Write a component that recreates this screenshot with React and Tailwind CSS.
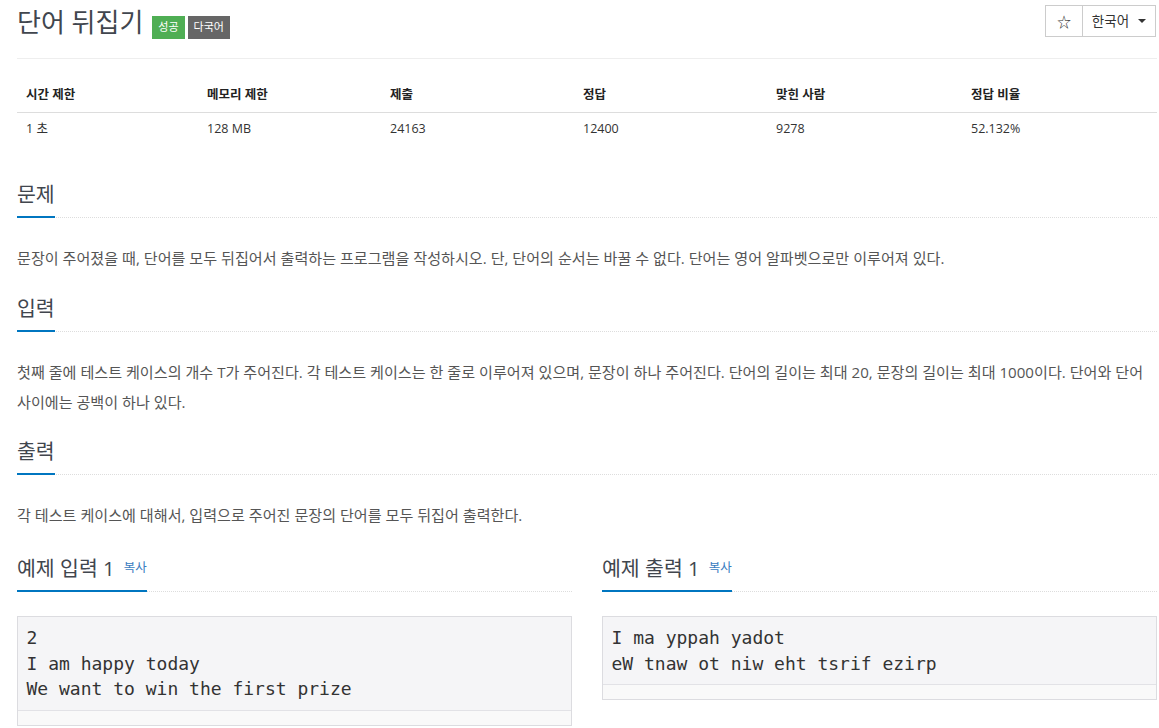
import React from 'react';

const FONT = { fontFamily: '"Open Sans", "Noto Sans CJK KR", sans-serif' };
const MONO = { fontFamily: '"DejaVu Sans Mono", "Liberation Mono", monospace' };

const stats = [
  { label: '시간 제한', value: '1 초' },
  { label: '메모리 제한', value: '128 MB' },
  { label: '제출', value: '24163' },
  { label: '정답', value: '12400' },
  { label: '맞힌 사람', value: '9278' },
  { label: '정답 비율', value: '52.132%' },
];

function Headline({ children, extra }) {
  return (
    <div className="border-b border-dotted border-[#ddd]">
      <span className="inline-flex items-center -mb-px border-b-2 border-[#0076c0] pb-[8px] leading-[28px] text-[20.5px] text-[#41464e]">
        {children}
        {extra}
      </span>
    </div>
  );
}

function Section({ title, children, className = '' }) {
  return (
    <section className={className}>
      <Headline>{title}</Headline>
      <p className="mt-[25px] text-[15.1px] leading-[30px] text-[#555] break-keep">{children}</p>
    </section>
  );
}

function SampleBox({ title, lines }) {
  return (
    <div>
      <Headline extra={<span className="ml-[9px] text-[12.5px] text-[#3a7cc0]">복사</span>}>{title}</Headline>
      <div className="mt-[24px] border border-[#dcdce0] bg-[#f5f5f7]">
        <pre className="px-[8.5px] py-[8px] text-[18px] leading-[25.7px] text-[#333]" style={MONO}>
          {lines.join('\n')}
        </pre>
        <div className="h-[15px] border-t border-[#e2e2e6] bg-[#f9f9f9]" />
      </div>
    </div>
  );
}

export default function App() {
  return (
    <div className="h-screen overflow-hidden bg-white text-[#333]" style={FONT}>
      <div className="ml-[17px] w-[1140px]">
        {/* 제목 */}
        <div className="flex h-[59px] items-start justify-between border-b border-[#eee]">
          <div className="flex items-start">
            <h1 className="mt-[5px] text-[26px] leading-[34px] text-[#41464e]">단어 뒤집기</h1>
            <span className="ml-[9px] mt-[16px] flex h-[23px] items-center bg-[#4fae54] px-[6px] text-[11px] text-white">성공</span>
            <span className="ml-[3px] mt-[16px] flex h-[23px] items-center bg-[#666] px-[6px] text-[11px] text-white">다국어</span>
          </div>
          <div className="mr-[1px] mt-[5px] flex h-[32px] border border-[#ccc] text-[13.5px] text-[#333]">
            <div className="flex w-[37px] items-center justify-center border-r border-[#ccc] text-[14px]">☆</div>
            <div className="flex w-[72px] items-center justify-center gap-[9px]">
              <span>한국어</span>
              <svg width="8" height="4" viewBox="0 0 8 4"><path d="M0 0h8L4 4z" fill="#333" /></svg>
            </div>
          </div>
        </div>

        {/* 통계 */}
        <div className="mt-[19px] grid grid-cols-[181px_183px_193px_193px_195px_1fr] text-[12.5px]">
          {stats.map((s) => (
            <div key={s.label} className="flex h-[35px] items-center border-b border-[#ddd] pl-[9px] font-bold text-[#222]">
              {s.label}
            </div>
          ))}
          {stats.map((s) => (
            <div key={s.label + 'v'} className="flex h-[32px] items-center pl-[9px] text-[#333]">
              {s.value}
            </div>
          ))}
        </div>

        <Section title="문제" className="mt-[35px]">
          문장이 주어졌을 때, 단어를 모두 뒤집어서 출력하는 프로그램을 작성하시오. 단, 단어의 순서는 바꿀 수 없다. 단어는 영어 알파벳으로만 이루어져 있다.
        </Section>

        <Section title="입력" className="mt-[21px]">
          첫째 줄에 테스트 케이스의 개수 T가 주어진다. 각 테스트 케이스는 한 줄로 이루어져 있으며, 문장이 하나 주어진다. 단어의 길이는 최대 20, 문장의 길이는 최대 1000이다. 단어와 단어 사이에는 공백이 하나 있다.
        </Section>

        <Section title="출력" className="mt-[20px]">
          각 테스트 케이스에 대해서, 입력으로 주어진 문장의 단어를 모두 뒤집어 출력한다.
        </Section>

        <div className="mt-[24px] grid grid-cols-2 items-start gap-[30px]">
          <SampleBox title="예제 입력 1" lines={['2', 'I am happy today', 'We want to win the first prize']} />
          <SampleBox title="예제 출력 1" lines={['I ma yppah yadot', 'eW tnaw ot niw eht tsrif ezirp']} />
        </div>
      </div>
    </div>
  );
}
